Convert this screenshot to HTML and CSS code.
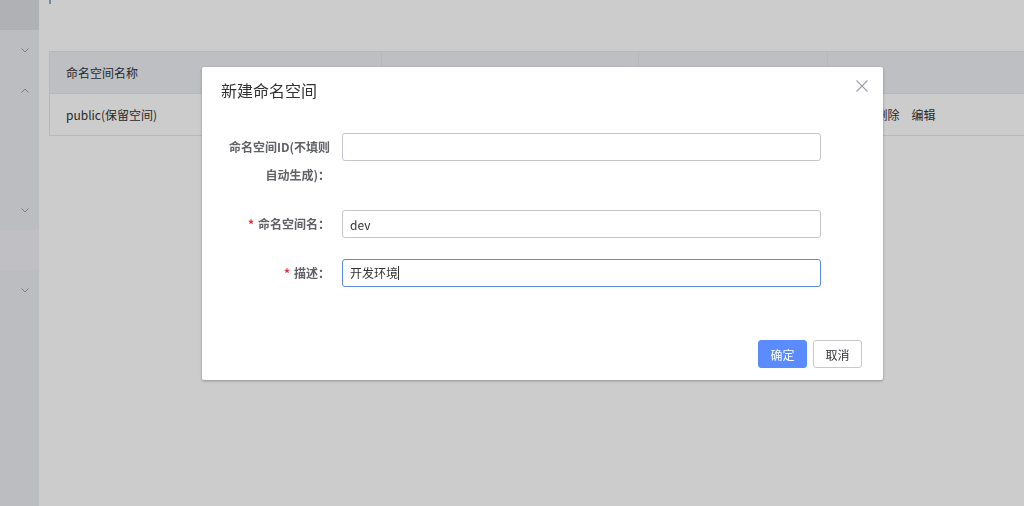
FILE: index.html
```html
<!DOCTYPE html>
<html lang="zh-CN">
<head>
    <meta charset="UTF-8">
    <meta name="viewport" content="width=device-width, initial-scale=1.0">
    <title>命名空间</title>
    <link rel="stylesheet" href="styles.css">
</head>
<body>

<div class="layout">
    <aside class="sidebar">
        <div class="logo"></div>
        <div class="menu-item"><svg class="chevron" viewBox="0 0 8 5"><path d="M0.5 0.5 L4 4 L7.5 0.5"/></svg></div>
        <div class="menu-item"><svg class="chevron" viewBox="0 0 8 5"><path d="M0.5 4.5 L4 1 L7.5 4.5"/></svg></div>
        <div class="menu-item"></div>
        <div class="menu-item"></div>
        <div class="menu-item"><svg class="chevron" viewBox="0 0 8 5"><path d="M0.5 0.5 L4 4 L7.5 0.5"/></svg></div>
        <div class="menu-item active"></div>
        <div class="menu-item"><svg class="chevron" viewBox="0 0 8 5"><path d="M0.5 0.5 L4 4 L7.5 0.5"/></svg></div>
    </aside>

    <main class="main">
        <div class="page-title"></div>
        <table class="grid">
            <thead>
            <tr>
                <th class="col-name">命名空间名称</th>
                <th class="col-id"></th>
                <th class="col-count"></th>
                <th class="col-ops"></th>
            </tr>
            </thead>
            <tbody>
            <tr>
                <td>public(保留空间)</td>
                <td></td>
                <td></td>
                <td class="actions"><a>详情</a><a>删除</a><a>编辑</a></td>
            </tr>
            </tbody>
        </table>
    </main>
</div>

<div class="overlay">
    <div class="modal">
        <div class="modal-header">
            <h2 class="modal-title">新建命名空间</h2>
            <svg class="close-button" viewBox="0 0 12 12"><path d="M0.5 0.5 L11.5 11.5 M11.5 0.5 L0.5 11.5"/></svg>
        </div>
        <div class="modal-body">
            <div class="form-item">
                <label class="form-label">命名空间ID(不填则自动生成)：</label>
                <input class="form-input" type="text" value="">
            </div>
            <div class="form-item">
                <label class="form-label"><span class="required">*</span>命名空间名：</label>
                <input class="form-input" type="text" value="dev">
            </div>
            <div class="form-item">
                <label class="form-label"><span class="required">*</span>描述：</label>
                <div class="form-input is-focus">开发环境<span class="caret"></span></div>
            </div>
        </div>
        <div class="modal-footer">
            <button class="btn btn-primary">确定</button>
            <button class="btn">取消</button>
        </div>
    </div>
</div>

</body>
</html>
```

FILE: styles.css
```css
body {
    font-family: "Noto Sans CJK SC", "Noto Sans", sans-serif;
    margin: 0;
    height: 506px;
    overflow: hidden;
    background-color: #fff;
    color: #333;
}

.layout {
    display: flex;
    height: 100%;
}

/* Sidebar */
.sidebar {
    width: 39px;
    flex-shrink: 0;
    background-color: #eaedf2;
}

.logo {
    height: 30px;
    background-color: #dcdee2;
}

.menu-item {
    height: 40px;
    display: flex;
    align-items: center;
    justify-content: flex-end;
    padding-right: 10px;
}

.menu-item.active {
    background-color: #f0eff5;
}

.chevron {
    width: 8px;
    height: 5px;
    fill: none;
    stroke: #9a9ea6;
    stroke-width: 1;
}

/* Main */
.main {
    flex: 1;
    padding-left: 10px;
    overflow: hidden;
}

.page-title {
    height: 4px;
    width: 0;
    border-left: 2px solid #8ab0e0;
    margin-bottom: 47px;
}

.grid {
    width: 1000px;
    border-collapse: collapse;
    table-layout: fixed;
    font-size: 12px;
    border-left: 1px solid #e6e6e6;
}

.grid th, .grid td {
    height: 42px;
    padding: 0 16px;
    text-align: left;
    border-bottom: 1px solid #e6e6e6;
    box-sizing: border-box;
}

.grid thead tr {
    border-top: 1px solid #e6e6e6;
}

.grid th {
    font-weight: normal;
    background-color: #eeeff3;
    border-right: 1px solid #e6e6e6;
}

.col-name { width: 332px; }
.col-id { width: 257px; }
.col-count { width: 189px; }

.grid td.actions {
    padding-left: 12px;
}

.actions a {
    margin-right: 12px;
    color: #333;
}

/* Dialog */
.overlay {
    position: fixed;
    top: 0;
    left: 0;
    width: 100%;
    height: 100%;
    background-color: rgba(0, 0, 0, 0.2);
}

.modal {
    position: relative;
    width: 681px;
    margin: 67px 0 0 202px;
    background-color: #fff;
    border-radius: 2px;
    box-shadow: 0 1px 3px rgba(0, 0, 0, 0.3);
}

.modal-header {
    padding: 12px 20px 0 19px;
}

.modal-title {
    margin: 0;
    font-size: 16px;
    font-weight: normal;
    line-height: 22px;
    color: #333;
}

.close-button {
    position: absolute;
    top: 13px;
    right: 15px;
    width: 12px;
    height: 12px;
    stroke: #9aa0aa;
    stroke-width: 1.1;
    cursor: pointer;
}

.modal-body {
    padding: 32px 62px 0 20px;
}

.form-item {
    display: flex;
    align-items: flex-start;
    margin-bottom: 21px;
}

.form-item:last-child {
    margin-bottom: 0;
}

.form-label {
    width: 120px;
    padding-right: 12px;
    box-sizing: border-box;
    text-align: right;
    font-size: 12px;
    font-weight: bold;
    line-height: 28px;
    color: #606266;
}

.required {
    color: #f5222d;
    margin-right: 4px;
}

.form-input {
    flex: 1;
    height: 28px;
    box-sizing: border-box;
    margin: 0;
    padding: 0 7px;
    border: 1px solid #c4c6cc;
    border-radius: 3px;
    font-family: inherit;
    font-size: 12px;
    line-height: 26px;
    color: #333;
    outline: none;
}

.form-input.is-focus {
    display: flex;
    align-items: center;
    border-color: #5a8ae8;
}

.caret {
    display: inline-block;
    width: 1px;
    height: 14px;
    background-color: #333;
}

.modal-footer {
    display: flex;
    justify-content: flex-end;
    gap: 6px;
    padding: 53px 21px 12px;
}

.btn {
    width: 49px;
    height: 28px;
    padding: 0;
    font-family: inherit;
    font-size: 12px;
    color: #333;
    background-color: #fff;
    border: 1px solid #c8c9cf;
    border-radius: 3px;
    cursor: pointer;
}

.btn-primary {
    color: #fff;
    background-color: #5a8cff;
    border-color: #5a8cff;
}
```
